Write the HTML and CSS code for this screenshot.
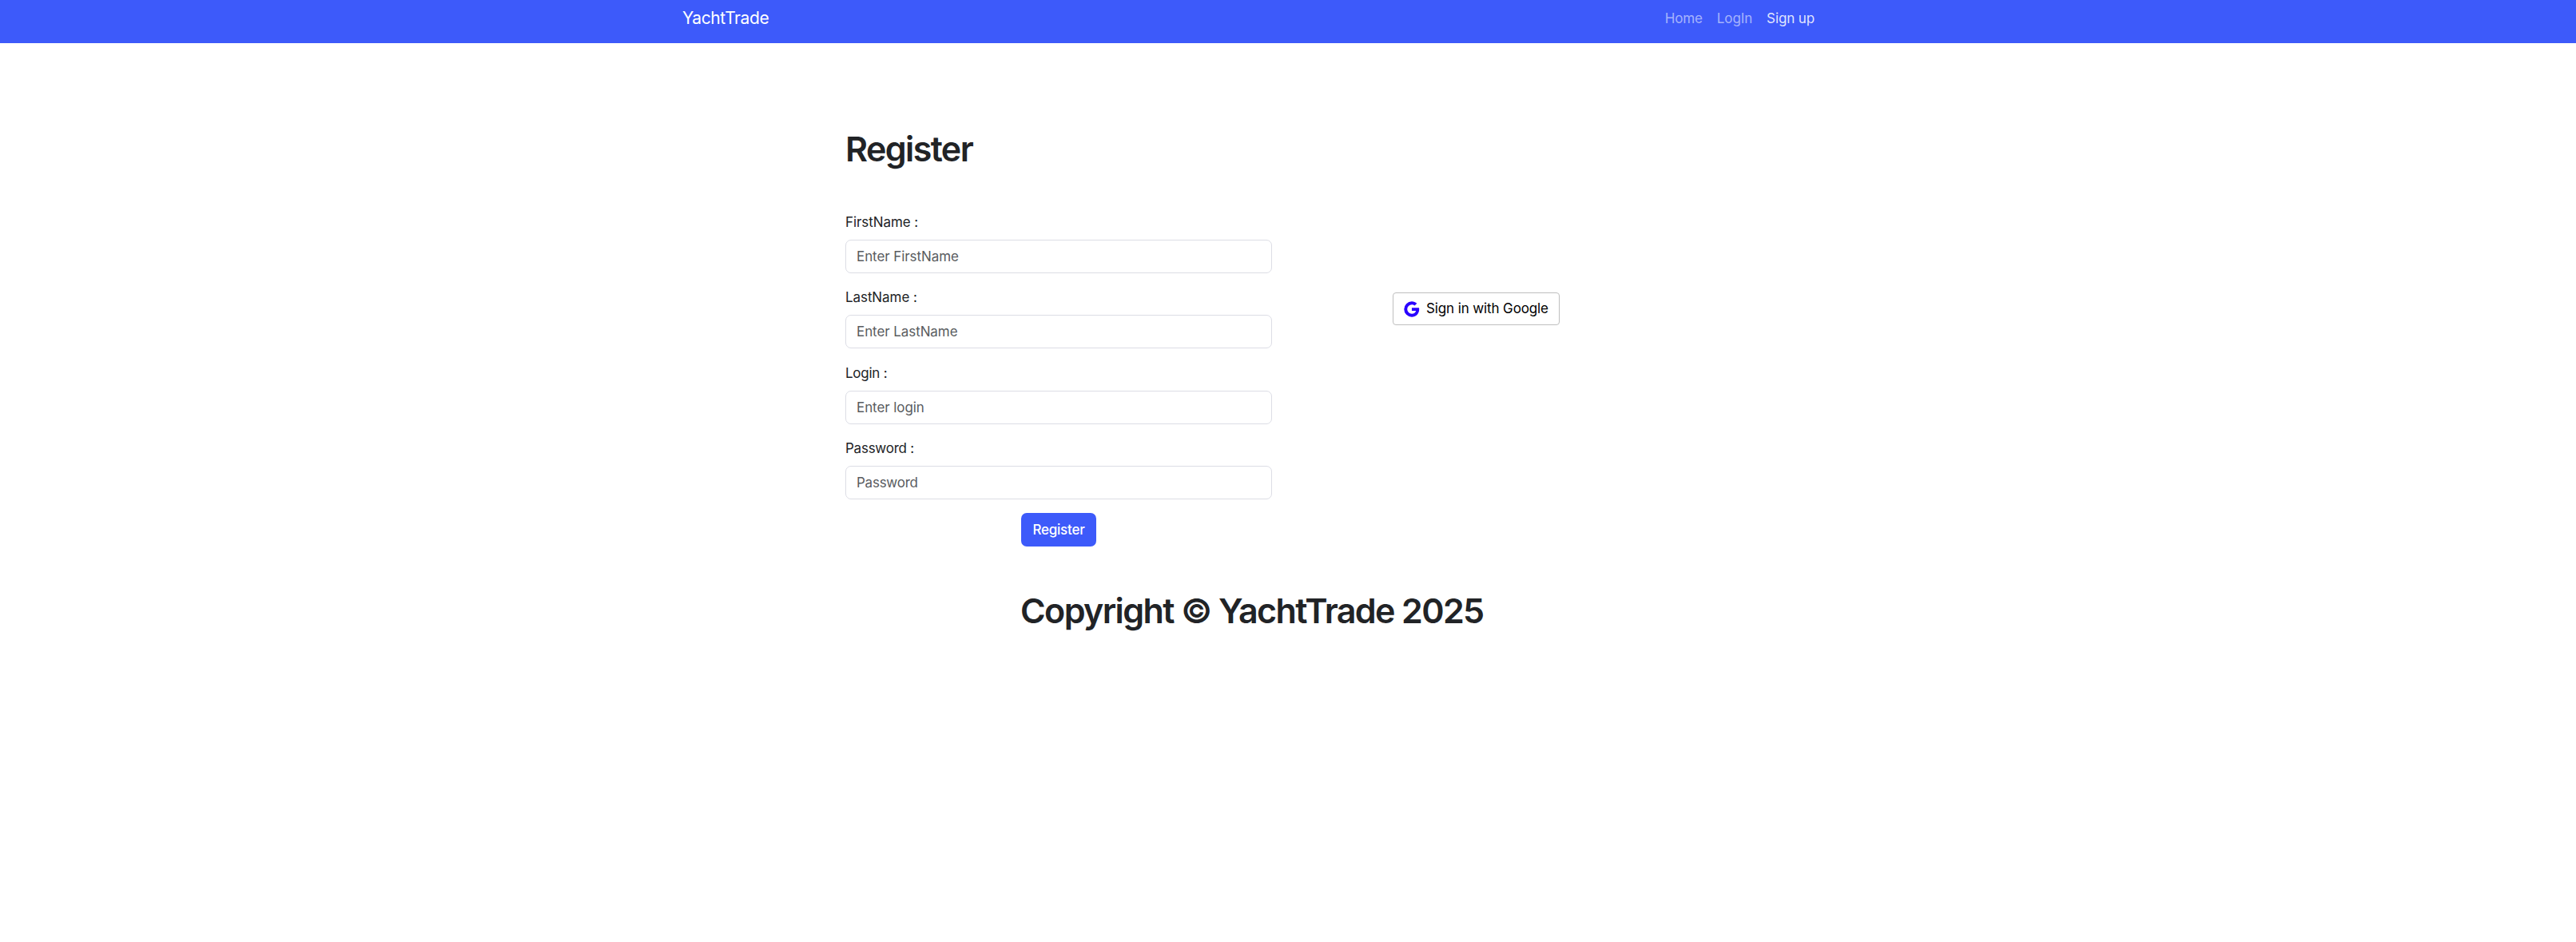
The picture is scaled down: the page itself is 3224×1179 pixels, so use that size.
FILE: index.html
```html
<!DOCTYPE html>
<html lang="en">
<head>
<meta charset="utf-8">
<title>YachtTrade</title>
<link rel="stylesheet" href="styles.css">
</head>
<body>
<header class="navbar">
  <div class="navbar-inner">
    <a class="brand">YachtTrade</a>
    <nav class="nav-links"><a>Home</a><a>LogIn</a><a class="active">Sign up</a></nav>
  </div>
</header>
<main class="page">
  <h1 class="title">Register</h1>
  <div class="columns">
    <form class="form">
      <label class="label wide" for="first">FirstName :</label>
      <input class="input wide" id="first" type="text" placeholder="Enter FirstName">
      <label class="label wide" for="last">LastName :</label>
      <input class="input wide" id="last" type="text" placeholder="Enter LastName">
      <label class="label" for="login">Login :</label>
      <input class="input wide" id="login" type="text" placeholder="Enter login">
      <label class="label" for="pass">Password :</label>
      <input class="input" id="pass" type="password" placeholder="Password">
      <button class="submit" type="button">Register</button>
    </form>
    <button class="google" type="button">
      <svg class="google-icon" viewBox="0 0 24 24" aria-hidden="true"><path d="M20.283 10.356h-8.327v3.451h4.792c-.446 2.193-2.313 3.453-4.792 3.453a5.27 5.27 0 0 1-5.279-5.28 5.27 5.27 0 0 1 5.279-5.279c1.259 0 2.397.447 3.29 1.178l2.6-2.599c-1.584-1.381-3.615-2.233-5.89-2.233a8.908 8.908 0 0 0-8.934 8.934 8.907 8.907 0 0 0 8.934 8.934c4.467 0 8.529-3.249 8.529-8.934 0-.528-.081-1.097-.202-1.625z"/></svg>
      <span>Sign in with Google</span>
    </button>
  </div>
</main>
<footer class="footer">Copyright © YachtTrade 2025</footer>
</body>
</html>
```
FILE: styles.css
```css
* { box-sizing: border-box; }
body {
  margin: 0;
  background: #fff;
  color: #212326;
  font: 400 17px/26.4px Inter, "Liberation Sans", sans-serif;
  letter-spacing: -0.25px;
}
.navbar { height: 54px; background: #3d5afa; color: #fff; }
.navbar-inner {
  display: flex;
  justify-content: space-between;
  width: 1417px;
  height: 46px;
  margin-left: 854px;
  align-items: center;
}
.brand { font-size: 21px; letter-spacing: -0.4px; }
.nav-links { display: flex; gap: 18px; letter-spacing: -0.12px; color: rgba(255, 255, 255, 0.55); }
.nav-links .active { color: rgba(255, 255, 255, 0.85); }
.page { padding: 106px 0 0 1058px; }
.title { margin: 0; font-size: 43px; line-height: 53px; font-weight: 600; letter-spacing: -1.6px; }
.columns { display: flex; align-items: flex-start; margin-top: 52px; }
.form { display: flex; flex-direction: column; width: 534px; }
.label { margin-bottom: 8.6px; }
.input {
  width: 100%;
  height: 41.8px;
  margin: 0 0 17.6px;
  padding: 0 13px;
  border: 1px solid #dcdde5;
  border-radius: 7px;
  background: #fff;
  font: inherit;
  letter-spacing: inherit;
}
.wide { letter-spacing: -0.08px; }
.input::placeholder { color: #595c5f; opacity: 1; }
.submit {
  align-self: center;
  width: 94px;
  height: 42px;
  margin-top: -0.8px;
  padding: 1px 0 0;
  border: 0;
  border-radius: 7px;
  background: #3d5afa;
  color: #fff;
  font: inherit;
  font-weight: 500;
  letter-spacing: inherit;
}
.google {
  display: flex;
  align-items: center;
  width: 209px;
  height: 41px;
  margin: 101px 0 0 151px;
  padding: 0 0 0 10px;
  border: 1px solid #bfbfbf;
  border-radius: 4px;
  background: #fff;
  color: #000;
  font: inherit;
  letter-spacing: -0.12px;
  white-space: nowrap;
}
.google-icon { width: 26px; height: 26px; margin-right: 5px; fill: #2a00ff; }
.footer {
  margin: 54px 0 0 1277px;
  font-size: 43px;
  line-height: 53px;
  font-weight: 600;
  letter-spacing: -1.62px;
}
```
